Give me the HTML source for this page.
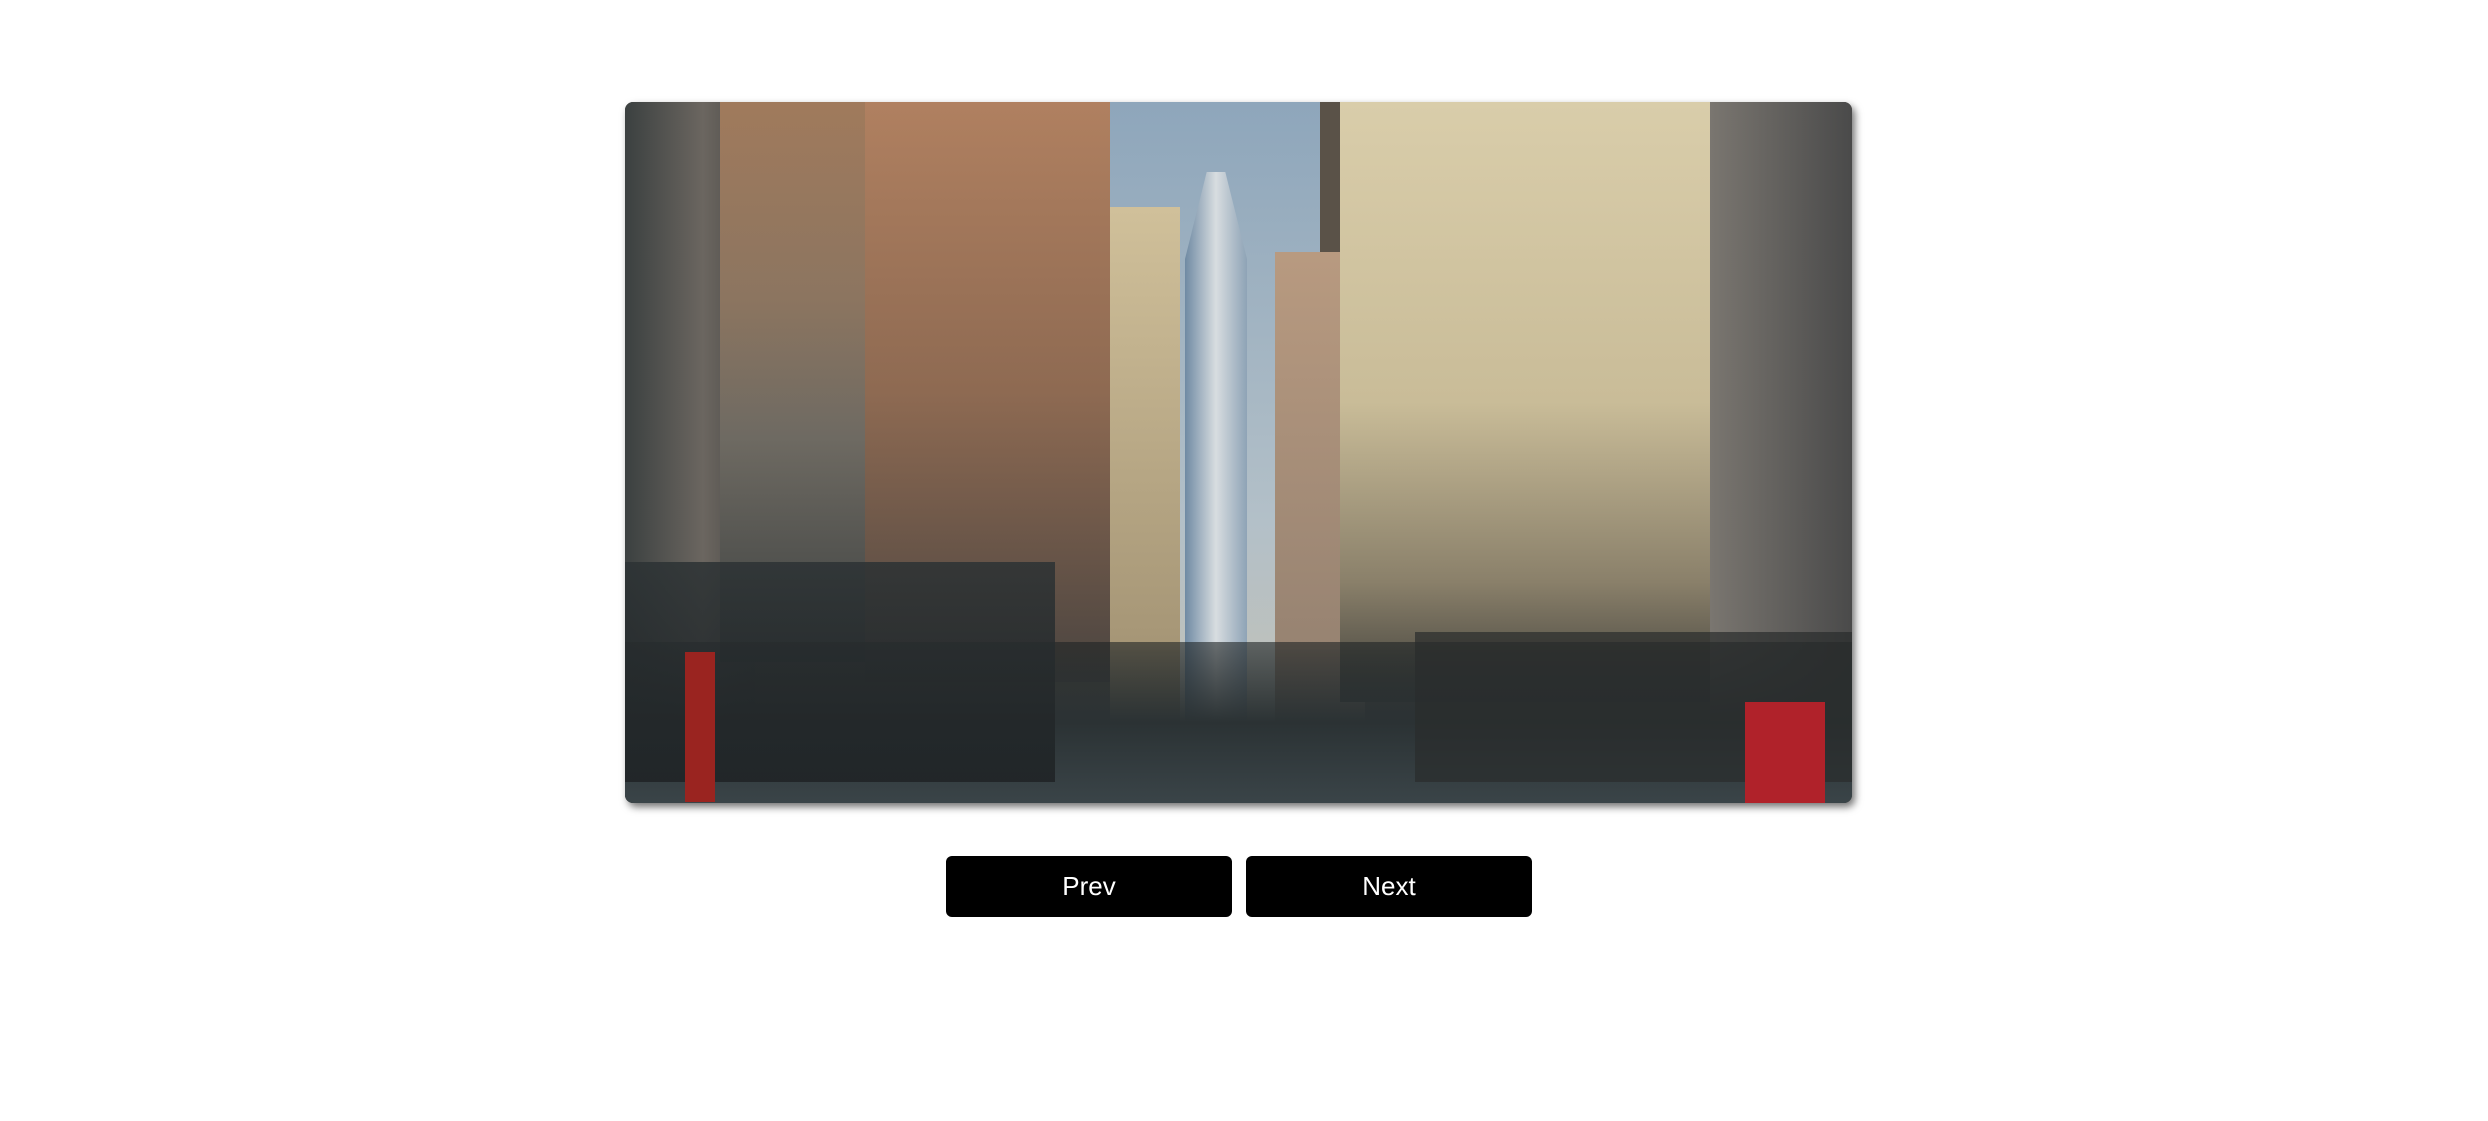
<!DOCTYPE html>
<html><head><meta charset="utf-8"><style>
html,body{margin:0;padding:0;background:#fff;width:2488px;height:1121px;overflow:hidden;font-family:"Liberation Sans",sans-serif}
.img{position:absolute;left:625px;top:102px;width:1227px;height:701px;border-radius:8px;overflow:hidden;box-shadow:3px 4px 8px rgba(0,0,0,.55);background:#5a5248}
.img div{position:absolute}
.btn{position:absolute;top:856px;height:61px;width:286px;background:#000;color:#fff;border-radius:6px;font-size:26px;text-align:center;line-height:61px}
</style></head><body>
<div class="img">
  <div style="left:0;top:0;width:130px;height:701px;background:linear-gradient(90deg,#3b4040,#6b6660 60%,#4a4845)"></div>
  <div style="left:95px;top:0;width:300px;height:560px;background:linear-gradient(180deg,#a07a5c,#8c7560 35%,#6e6a62 60%,#3c4040)"></div>
  <div style="left:240px;top:0;width:245px;height:580px;background:linear-gradient(180deg,#b08060,#8e6a52 50%,#4a4440)"></div>
  <div style="left:485px;top:0;width:210px;height:701px;background:linear-gradient(180deg,#8ea6bb,#b3c0c8 60%,#c8c2b0)"></div>
  <div style="left:485px;top:105px;width:70px;height:560px;background:linear-gradient(180deg,#d0c09a,#9a8a6c)"></div>
  <div style="left:560px;top:70px;width:62px;height:580px;background:linear-gradient(90deg,#6f8aa3,#d8dde0 50%,#8ea3b6);clip-path:polygon(35% 0,65% 0,100% 15%,100% 100%,0 100%,0 15%)"></div>
  <div style="left:650px;top:150px;width:90px;height:551px;background:linear-gradient(180deg,#b89a80,#8a7a6c)"></div>
  <div style="left:715px;top:0;width:380px;height:600px;background:linear-gradient(180deg,#d9cdaa,#c9bc98 50%,#8a806a 80%,#3e3e3a)"></div>
  <div style="left:1085px;top:0;width:142px;height:701px;background:linear-gradient(90deg,#7a7670,#4a4a4a)"></div>
  <div style="left:0;top:540px;width:1227px;height:161px;background:linear-gradient(180deg,rgba(30,35,36,.6),#2b3234 50%,#3a4448)"></div>
  <div style="left:0;top:460px;width:430px;height:220px;background:linear-gradient(180deg,#2c3234,#1e2224);opacity:.85"></div>
  <div style="left:790px;top:530px;width:437px;height:150px;background:#2a2c2c;opacity:.7"></div>
  <div style="left:1120px;top:600px;width:80px;height:101px;background:#b0222a"></div>
  <div style="left:60px;top:550px;width:30px;height:150px;background:#9a2420"></div>
</div>
<div class="btn" style="left:946px">Prev</div>
<div class="btn" style="left:1246px">Next</div>
</body></html>
